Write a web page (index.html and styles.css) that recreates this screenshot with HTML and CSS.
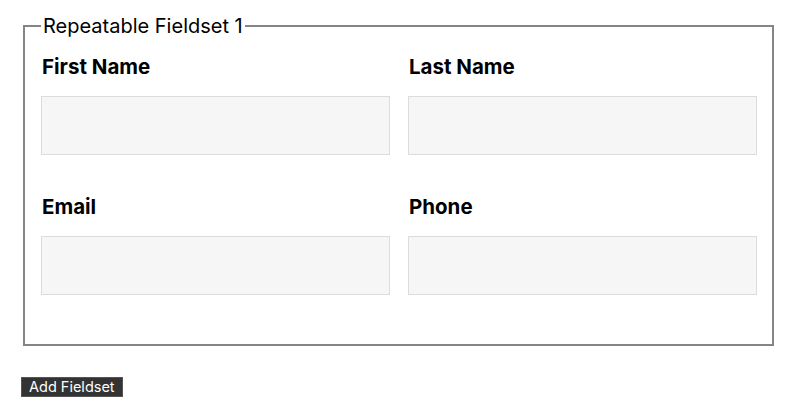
FILE: index.html
```html
<!DOCTYPE html>
<html>
<head>
<meta charset="utf-8">
<link rel="stylesheet" href="styles.css">
</head>
<body>
<form class="form">
  <fieldset class="group">
    <legend class="group-title">Repeatable Fieldset 1</legend>
    <div class="grid">
      <div class="field">
        <label class="field-label">First Name</label>
        <input class="field-input" type="text">
      </div>
      <div class="field">
        <label class="field-label">Last Name</label>
        <input class="field-input" type="text">
      </div>
      <div class="field">
        <label class="field-label">Email</label>
        <input class="field-input" type="text">
      </div>
      <div class="field">
        <label class="field-label">Phone</label>
        <input class="field-input" type="text">
      </div>
    </div>
  </fieldset>
  <div class="actions">
    <button class="add-btn" type="button">Add Fieldset</button>
  </div>
</form>
</body>
</html>
```

FILE: styles.css
```css
html, body {
  margin: 0;
  padding: 0;
  background: #fff;
}
body {
  font-family: Inter, "Liberation Sans", Arial, sans-serif;
  color: #000;
}
.form {
  padding: 14px 26px 0 23px;
}
.group {
  margin: 0;
  border: 2px solid #858585;
  padding: 17px 15px 49px 16px;
}
.group-title {
  font-size: 20px;
  line-height: 24px;
  padding: 0 2px;
  margin-left: 0;
}
.grid {
  display: grid;
  grid-template-columns: 1fr 1fr;
  column-gap: 18px;
  row-gap: 40px;
}
.field {
  display: flex;
  flex-direction: column;
}
.field-label {
  font-size: 20.5px;
  font-weight: 700;
  line-height: 24px;
  padding-left: 1px;
  margin-bottom: 17px;
}
.field-input {
  box-sizing: border-box;
  height: 59px;
  margin: 0;
  border: 1px solid #dcdcdc;
  background: #f6f6f6;
  font: inherit;
}
.actions {
  padding-top: 30px;
  margin-left: -2px;
}
.add-btn {
  font-family: inherit;
  font-size: 14.5px;
  line-height: 18px;
  height: 20px;
  padding: 0 7px;
  background: #333;
  color: #fff;
  border: 1px solid #555;
  border-radius: 0;
}
```
